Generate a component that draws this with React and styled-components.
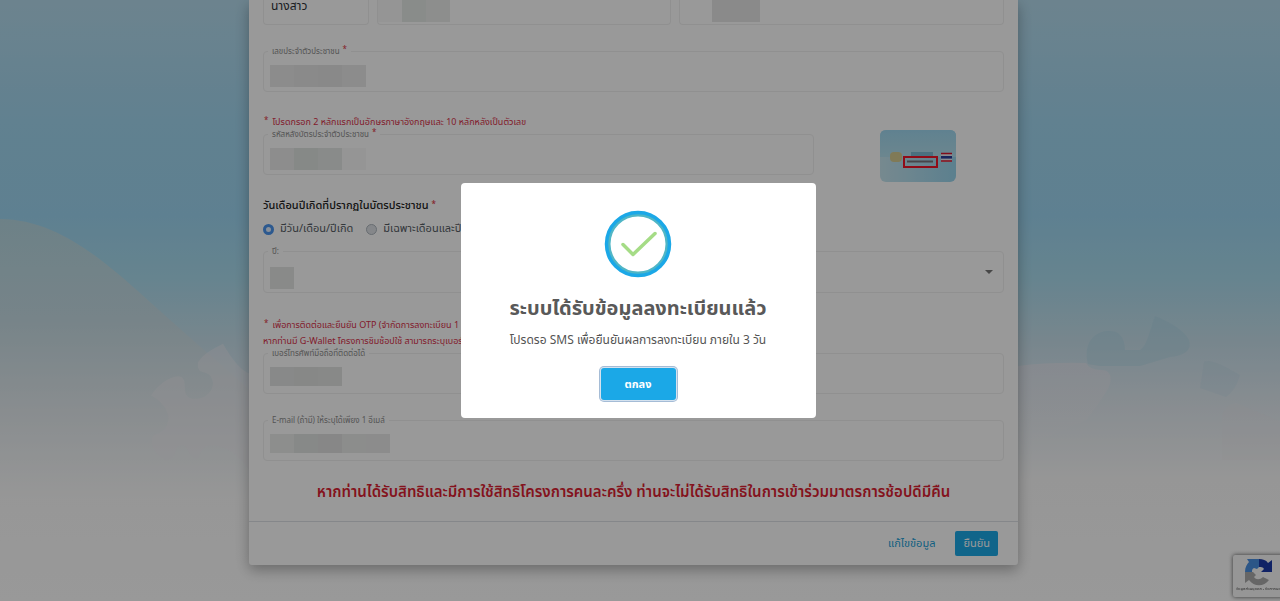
import React, { useState } from "react";
import styled, { createGlobalStyle } from "styled-components";

const GlobalStyle = createGlobalStyle`
  * {
    box-sizing: border-box;
  }

  body {
    margin: 0;
    background: #fff;
    color: #333b44;
    font-family: "Noto Sans Thai", "Noto Sans", sans-serif;
    font-size: 12px;
    overflow: hidden;
  }

  button, input, select {
    font-family: inherit;
  }
`;

const Page = styled.div`
  position: relative;
  min-height: 100vh;
  padding-right: 13px;
`;

const Sky = styled.svg`
  position: absolute;
  top: 0;
  left: 0;
  width: 100%;
  height: 100%;
`;

const Card = styled.form`
  position: relative;
  width: 60%;
  min-width: 769px;
  margin: 0 auto;
  background: #fff;
  border-radius: 0 0 3px 3px;
  box-shadow: 0 5px 14px rgba(0, 0, 0, 0.3);
`;

const CardBody = styled.div`
  padding: 0 14px 16px;
`;

const NameRow = styled.div`
  display: flex;
  gap: 8px;
  height: 25px;
  margin-bottom: 20px;
`;

const NameField = styled.div`
  flex: ${props => (props.$small ? "0 0 106px" : "1 1 0")};
  display: flex;
  padding-left: ${props => props.$pad}px;
  border: 1px solid #f0f0f0;
  border-top: 0;
  border-radius: 0 0 4px 4px;
`;

const Prefix = styled.input`
  width: 100%;
  height: 12px;
  padding: 0;
  border: 0;
  background: none;
  color: #2b3036;
  font-size: 12px;
  line-height: 12px;
`;

const Fieldset = styled.fieldset`
  min-width: 0;
  height: ${props => (props.$tall ? 48 : 47)}px;
  margin: 0 0 ${props => props.$gap || 0}px;
  padding: 0 6px;
  border: 1px solid #f0f0f0;
  border-radius: 4px;
`;

const Legend = styled.legend`
  height: 12px;
  margin-left: -2px;
  padding: 0 4px;
  color: #8d8d8d;
  font-size: 8px;
  line-height: 14px;
`;

const Star = styled.span`
  color: #dc3545;
  font-size: 8px;
  line-height: 8px;
  vertical-align: 2px;
  margin: 0 ${props => (props.$lead ? 4 : 0)}px 0 ${props => (props.$lead ? 1 : 3)}px;
`;

const Control = styled.div`
  display: flex;
  align-items: center;
  height: ${props => (props.$tall ? 41 : 38)}px;
  padding-bottom: ${props => (props.$short ? 4 : 0)}px;
`;

const Mosaic = styled.span`
  display: flex;
  height: ${props => (props.$short ? 19 : 22)}px;
`;

const Block = styled.span`
  width: 24px;
  background: ${props => props.$color};
`;

const Input = styled.input`
  flex: 1;
  min-width: 0;
  height: 22px;
  padding: 0;
  border: 0;
  outline: 0;
  background: none;
`;

const Select = styled.select`
  flex: 1;
  height: 22px;
  border: 0;
  appearance: none;
  background: none;
`;

const Caret = styled.svg`
  width: 8px;
  height: 5px;
  margin: -10px 4px 0 0;
`;

const Note = styled.p`
  margin: 0;
  color: #d9304a;
  font-size: 9px;
  line-height: ${props => props.$line || 12}px;
  white-space: nowrap;
`;

const CodeRow = styled.div`
  display: flex;
  margin-top: 24px;
`;

const CodeColumn = styled.div`
  flex: 1;
  min-width: 0;
`;

const IdCard = styled.svg`
  flex: none;
  width: 76px;
  height: 52px;
  margin: 14px 48px 0 66px;
`;

const Heading = styled.h2`
  margin: 16px 0 7px;
  color: #222;
  font-size: 11px;
  font-weight: 500;
  line-height: 16px;
`;

const Radios = styled.div`
  display: flex;
  gap: 13px;
  height: 16px;
  margin-bottom: 8px;
`;

const RadioLabel = styled.label`
  display: flex;
  align-items: center;
  gap: 6px;
  color: #555c64;
  font-size: 11px;
  line-height: 16px;
  white-space: nowrap;
`;

const Radio = styled.input`
  appearance: none;
  width: 11px;
  height: 11px;
  margin: 0;
  border: 1px solid #adb5bd;
  border-radius: 50%;
  background: #dee2e6;

  &:checked {
    border: 3px solid #4a94ee;
    background: #e4f0ff;
  }
`;

const Notes = styled.div`
  margin-top: 24px;
  height: 30px;
`;

const Warning = styled.p`
  margin: 20px 0 0;
  color: #dc1f32;
  font-size: 15px;
  font-weight: 600;
  line-height: 24px;
  text-align: center;
  white-space: nowrap;
`;

const Footer = styled.div`
  display: flex;
  justify-content: flex-end;
  gap: 12px;
  padding: 9px 20px 9px;
  border-top: 1px solid #dee2e6;
`;

const FooterButton = styled.button`
  height: 25px;
  padding: 0 8px;
  border: 0;
  border-radius: 2px;
  background: ${props => (props.$primary ? "#1ba8e7" : "none")};
  color: ${props => (props.$primary ? "#fff" : "#1b9fd8")};
  font-size: 11px;
  line-height: 24px;
`;

const Captcha = styled.div`
  position: fixed;
  right: -4px;
  bottom: 4px;
  width: 51px;
  height: 42px;
  padding-top: 3px;
  overflow: hidden;
  border-radius: 2px;
  background: #fafafa;
  box-shadow: 0 0 4px #555;
  color: #444;
  font-size: 4px;
  line-height: 6px;
  text-align: center;
  white-space: nowrap;

  svg {
    display: block;
    width: 28px;
    height: 28px;
    margin: 0 auto;
  }
`;

const Overlay = styled.div`
  position: fixed;
  inset: 0;
  display: flex;
  align-items: center;
  justify-content: center;
  padding-right: 4px;
  background: rgba(0, 0, 0, 0.4);
`;

const Modal = styled.div`
  display: flex;
  flex-direction: column;
  align-items: center;
  width: 355px;
  padding: 27px 16px 18px;
  border-radius: 4px;
  background: #fff;
  color: #545454;
`;

const SuccessIcon = styled.svg`
  width: 68px;
  height: 68px;
`;

const ModalTitle = styled.h1`
  margin: 16px 0 0;
  color: #595959;
  font-size: 20px;
  font-weight: 700;
  line-height: 30px;
  white-space: nowrap;
`;

const ModalText = styled.p`
  margin: 6px 0 18px;
  font-size: 12px;
  line-height: 20px;
  white-space: nowrap;
`;

const OkButton = styled.button`
  width: 75px;
  height: 32px;
  border: 0;
  border-radius: 3px;
  outline: 0;
  background: #1ba8e7;
  box-shadow: 0 0 0 1px #d5e2ef, 0 0 0 2px #a5bcd6;
  color: #fff;
  font-size: 11px;
  font-weight: 700;
`;

function Pixels({ colors, short }) {
  return (
    <Mosaic $short={short}>
      {colors.map((color, i) => (
        <Block key={i} $color={color} />
      ))}
    </Mosaic>
  );
}

function Field({ id, label, required, colors, gap, short }) {
  return (
    <Fieldset $gap={gap}>
      <Legend>
        <label htmlFor={id}>{label}</label>
        {required && <Star>*</Star>}
      </Legend>
      <Control $short={short}>
        <Pixels colors={colors} short={short} />
        <Input id={id} type="text" />
      </Control>
    </Fieldset>
  );
}

function Background() {
  return (
    <Sky viewBox="0 0 1280 601" preserveAspectRatio="none" aria-hidden="true">
      <defs>
        <linearGradient id="sky" x1="0" y1="0" x2="0" y2="1">
          <stop offset="0" stopColor="#b5dbed" />
          <stop offset="0.2" stopColor="#a2d7f0" />
          <stop offset="0.36" stopColor="#9dd6f2" />
          <stop offset="0.46" stopColor="#aadcee" />
          <stop offset="0.57" stopColor="#c8e0ec" />
          <stop offset="0.68" stopColor="#e4ecf2" />
          <stop offset="0.8" stopColor="#fbfbfb" />
          <stop offset="1" stopColor="#ffffff" />
        </linearGradient>
        <linearGradient id="hill" x1="0" y1="0" x2="0" y2="1">
          <stop offset="0" stopColor="#b6d8e2" />
          <stop offset="0.35" stopColor="#c6dce4" />
          <stop offset="0.68" stopColor="#e4ebef" />
          <stop offset="1" stopColor="#fcfcfc" />
        </linearGradient>
        <linearGradient id="cloud" x1="0" y1="0" x2="0" y2="1">
          <stop offset="0" stopColor="#eae8f0" />
          <stop offset="1" stopColor="#f6f4f6" stopOpacity="0" />
        </linearGradient>
      </defs>
      <path fill="url(#sky)" d="M0 0h1280v601H0z" />
      <path
        fill="url(#hill)"
        d="M0 219C60 219 110 266 150 302Q190 338 250 390V500H0z"
      />
      <g transform="scale(1 1.15)">
        <path
          fill="#f3f0f4"
          opacity=".4"
          d="M151 344C158 334 174 324 182 328C188 333 181 342 190 346C204 350 218 338 211 328C207 321 196 327 198 315C204 307 214 303 223 299Q238 322 250 325V410C232 385 202 380 199 398C188 402 190 386 181 387C171 390 179 402 164 400C151 392 147 379 158 377C166 374 170 367 168 360Q163 349 151 344z"
        />
      </g>
      <path
        fill="url(#cloud)"
        opacity=".6"
        d="M1018 366Q1050 362 1086 363Q1090 370 1101 370C1114 370 1112 384 1106 392Q1096 408 1086 420L1018 450z"
      />
      <path
        fill="#a4d3e4"
        opacity=".3"
        d="M1088 364C1082 340 1098 330 1110 331C1122 331 1125 342 1125 350H1140C1147 346 1150 330 1155 316Q1182 327 1189 340C1193 351 1182 356 1170 357L1140 366H1100z"
      />
      <path
        fill="#a9d3e2"
        opacity=".15"
        d="M1204 362Q1210 357 1240 375Q1236 390 1226 397L1200 388z"
      />
      <path
        fill="#f0edf2"
        opacity=".2"
        d="M1222 415Q1226 405 1236 403L1280 421V460H1222z"
      />
    </Sky>
  );
}

function IdCardPicture() {
  return (
    <IdCard viewBox="0 0 76 52" role="img" aria-label="บัตรประชาชน">
      <defs>
        <linearGradient id="idTop" x1="0" y1="0" x2="0" y2="1">
          <stop offset="0" stopColor="#a0d8f0" />
          <stop offset="1" stopColor="#b4e0ee" />
        </linearGradient>
        <linearGradient id="idBottom" x1="0" y1="0" x2="1" y2="0">
          <stop offset="0" stopColor="#c6e5ef" />
          <stop offset="1" stopColor="#99d5ed" />
        </linearGradient>
      </defs>
      <rect width="76" height="52" rx="6" fill="url(#idBottom)" />
      <path d="M0 27V6Q0 0 6 0h64q6 0 6 6v21z" fill="url(#idTop)" />
      <rect x="10" y="22" width="12" height="10" rx="4" fill="#d6cb92" />
      <path d="M31 22h22v4H31z" fill="#7dbbd4" />
      <path d="M24 27h33v10H24z" fill="none" stroke="#f01428" strokeWidth="2" />
      <path d="M27 31.500h26" stroke="#78727b" strokeWidth="2" />
      <path d="M61 23h11v9H61z" fill="#e8eaf0" />
      <path d="M61 23.500h11M61 31h11" stroke="#d8142c" strokeWidth="1.600" />
      <path d="M61 27.300h11" stroke="#2b3f9b" strokeWidth="2.600" />
    </IdCard>
  );
}

function CaptchaBadge() {
  return (
    <Captcha>
      <svg viewBox="0 0 28 28" aria-hidden="true">
        <path
          fill="#4a90e2"
          d="M0 14C0 9 2 6 4 4L2 1h12v8l-2 2-3-1c-2 1-2 2-2 4z"
        />
        <path
          fill="#1c3aa9"
          d="M14 1c4 0 7 1 9 4l4-3v12H16l3-3c-1-2-3-2-5-2z"
        />
        <path
          fill="#ababab"
          d="M0 14h8l3 3-2 2c2 3 6 3 9 0l6 3c-5 7-15 7-20 0l-4 3z"
        />
      </svg>
      ข้อมูลส่วนบุคคล - ข้อกำหนด
    </Captcha>
  );
}

export default function App() {
  const [birth, setBirth] = useState("full");
  const [open, setOpen] = useState(true);

  return (
    <>
      <GlobalStyle />
      <Page>
        <Background />
        <Card onSubmit={e => e.preventDefault()}>
          <CardBody>
            <NameRow>
              <NameField $small $pad={7}>
                <Prefix aria-label="คำนำหน้า" defaultValue="นางสาว" />
              </NameField>
              <NameField $pad={0}>
                <Pixels colors={["#f9f9f9", "#e4e9e7", "#ebedec"]} />
                <Input aria-label="ชื่อ" />
              </NameField>
              <NameField $pad={32}>
                <Pixels colors={["#e6e6e6", "#e6e6e6"]} />
                <Input aria-label="นามสกุล" />
              </NameField>
            </NameRow>

            <Field
              id="citizen"
              label="เลขประจำตัวประชาชน"
              required
              colors={["#e9e9e9", "#e6e6e6", "#e4e4e4", "#eaeaea"]}
            />

            <CodeRow>
              <CodeColumn>
                <Note>
                  <Star $lead>*</Star>
                  โปรดกรอก 2 หลักแรกเป็นอักษรภาษาอังกฤษและ 10 หลักหลังเป็นตัวเลข
                </Note>
                <Field
                  id="laser"
                  label="รหัสหลังบัตรประจำตัวประชาชน"
                  required
                  colors={["#ebebeb", "#e0e4e2", "#e5e8e6", "#f8f8f8"]}
                />
              </CodeColumn>
              <IdCardPicture />
            </CodeRow>

            <Heading>
              วันเดือนปีเกิดที่ปรากฏในบัตรประชาชน<Star>*</Star>
            </Heading>
            <Radios>
              <RadioLabel>
                <Radio
                  type="radio"
                  name="birth"
                  checked={birth === "full"}
                  onChange={() => setBirth("full")}
                />
                มีวัน/เดือน/ปีเกิด
              </RadioLabel>
              <RadioLabel>
                <Radio
                  type="radio"
                  name="birth"
                  checked={birth === "month"}
                  onChange={() => setBirth("month")}
                />
                มีเฉพาะเดือนและปีเกิด
              </RadioLabel>
            </Radios>

            <Fieldset $tall>
              <Legend>
                <label htmlFor="year">ปี:</label>
              </Legend>
              <Control $tall>
                <Pixels colors={["#e4e6e5"]} />
                <Select id="year" />
                <Caret viewBox="0 0 8 5">
                  <path d="M0 0h8L4 4z" fill="#777" />
                </Caret>
              </Control>
            </Fieldset>

            <Notes>
              <Note $line={16}>
                <Star $lead>*</Star>
                เพื่อการติดต่อและยืนยัน OTP (จำกัดการลงทะเบียน 1 เบอร์โทรศัพท์
              </Note>
              <Note $line={16}>
                หากท่านมี G-Wallet โครงการชิมช้อปใช้ สามารถระบุเบอร์เดิมได้
              </Note>
            </Notes>
            <Field
              id="phone"
              label="เบอร์โทรศัพท์มือถือที่ติดต่อได้"
              colors={["#e3e5e4", "#e1e3e2", "#e3e4e3"]}
              gap={20}
              short
            />
            <Field
              id="email"
              label="E-mail (ถ้ามี) ให้ระบุได้เพียง 1 อีเมล์"
              colors={["#ebedec", "#e2e4e3", "#e2e2e2", "#e9ebea", "#e9e9e9"]}
              short
            />

            <Warning>
              หากท่านได้รับสิทธิและมีการใช้สิทธิโครงการคนละครึ่ง
              ท่านจะไม่ได้รับสิทธิในการเข้าร่วมมาตรการช้อปดีมีคืน
            </Warning>
          </CardBody>
          <Footer>
            <FooterButton type="button">แก้ไขข้อมูล</FooterButton>
            <FooterButton type="submit" $primary>
              ยืนยัน
            </FooterButton>
          </Footer>
        </Card>
        <CaptchaBadge />
      </Page>

      {open && (
        <Overlay>
          <Modal role="dialog" aria-modal="true" aria-labelledby="modal-title">
            <SuccessIcon viewBox="0 0 68 68" aria-hidden="true">
              <circle cx="34" cy="34" r="29" fill="none" stroke="#50b6c6" strokeWidth="3" />
              <circle cx="34" cy="34" r="31.500" fill="none" stroke="#1ba8e7" strokeWidth="3.500" />
              <path
                d="M19 34.500l10 10 22-21"
                fill="none"
                stroke="#a5dc86"
                strokeWidth="3.500"
                strokeLinecap="round"
                strokeLinejoin="round"
              />
            </SuccessIcon>
            <ModalTitle id="modal-title">ระบบได้รับข้อมูลลงทะเบียนแล้ว</ModalTitle>
            <ModalText>
              โปรดรอ SMS เพื่อยืนยันผลการลงทะเบียน ภายใน 3 วัน
            </ModalText>
            <OkButton type="button" onClick={() => setOpen(false)}>
              ตกลง
            </OkButton>
          </Modal>
        </Overlay>
      )}
    </>
  );
}
